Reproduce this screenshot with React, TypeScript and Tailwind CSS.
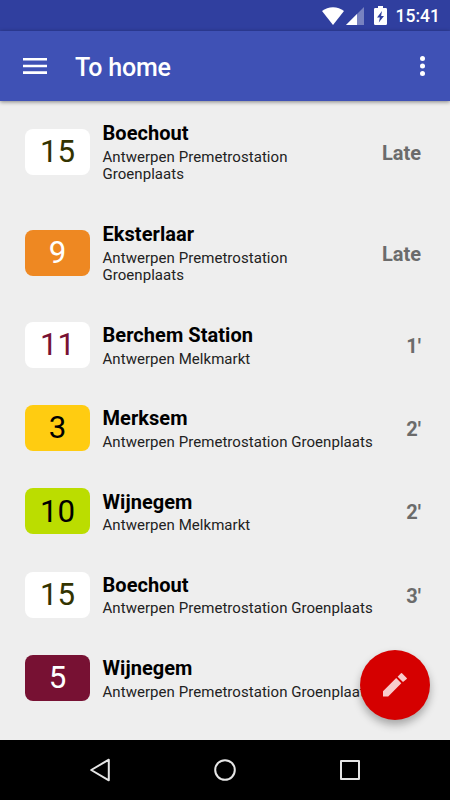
type Departure = {
  line: string;
  badge: string;
  destination: string;
  stop: string;
  time: string;
};

const departures: Departure[] = [
  { line: "15", badge: "bg-white text-[#333300]", destination: "Boechout", stop: "Antwerpen Premetrostation Groenplaats", time: "Late" },
  { line: "9", badge: "bg-[#ee8822] text-white", destination: "Eksterlaar", stop: "Antwerpen Premetrostation Groenplaats", time: "Late" },
  { line: "11", badge: "bg-white text-[#771133]", destination: "Berchem Station", stop: "Antwerpen Melkmarkt", time: "1'" },
  { line: "3", badge: "bg-[#ffcc11] text-black", destination: "Merksem", stop: "Antwerpen Premetrostation Groenplaats", time: "2'" },
  { line: "10", badge: "bg-[#bbdd00] text-black", destination: "Wijnegem", stop: "Antwerpen Melkmarkt", time: "2'" },
  { line: "15", badge: "bg-white text-[#333300]", destination: "Boechout", stop: "Antwerpen Premetrostation Groenplaats", time: "3'" },
  { line: "5", badge: "bg-[#771133] text-white", destination: "Wijnegem", stop: "Antwerpen Premetrostation Groenplaats", time: "" },
];

function StatusBar() {
  return (
    <div className="flex h-[31px] shrink-0 items-center justify-end bg-[#303f9f] pr-[10px] text-white">
      <svg className="mt-px h-[18px] w-[22px]" viewBox="0 0 22 18" fill="currentColor">
        <path d="M0 4C6-1.1 16-1.1 22 4L11 18Z" />
      </svg>
      <svg className="mt-px ml-[2px] h-[18px] w-[18px]" viewBox="0 0 18 18" fill="currentColor">
        <path d="M0 18 18 0V18Z" fillOpacity="0.35" />
        <path d="M0 18 11 7V18Z" />
      </svg>
      <svg className="ml-[10px] h-[19px] w-[13px]" viewBox="0 0 13 19" fill="currentColor">
        <path
          fillRule="evenodd"
          d="M4 0H9V2H11.8Q13 2 13 3.2V17.8Q13 19 11.8 19H1.2Q0 19 0 17.8V3.2Q0 2 1.2 2H4ZM8 5 3 11.4H5.9L4.8 16.4 10 9.9H7.1Z"
        />
      </svg>
      <span className="mt-[2px] ml-[9px] text-[17.5px] leading-none font-medium">15:41</span>
    </div>
  );
}

function Toolbar() {
  return (
    <header className="z-10 flex h-[70px] shrink-0 items-center bg-[#3f51b5] pr-[25px] pl-[23px] text-white shadow-[0_1px_4px_rgba(0,0,0,0.45)]">
      <button aria-label="Menu">
        <svg className="h-4 w-6" viewBox="0 0 24 16" fill="currentColor">
          <path d="M0 0H24V2.6H0ZM0 6.7H24V9.3H0ZM0 13.3H24V15.9H0Z" />
        </svg>
      </button>
      <h1 className="mt-[2px] ml-7 grow text-[25px] leading-none font-medium tracking-[-0.2px]">To home</h1>
      <button aria-label="More options">
        <svg className="h-5 w-[5px]" viewBox="0 0 5 20" fill="currentColor">
          <circle cx="2.5" cy="2.5" r="2.5" />
          <circle cx="2.5" cy="10" r="2.5" />
          <circle cx="2.5" cy="17.5" r="2.5" />
        </svg>
      </button>
    </header>
  );
}

function DepartureRow({ departure }: { departure: Departure }) {
  const late = departure.time === "Late";

  return (
    <li className="flex items-center py-[18.1px] pr-[29px] pl-[25px]">
      <div
        className={`flex h-[46px] w-[65px] shrink-0 items-center justify-center rounded-[8px] text-[31.25px] leading-none font-normal ${departure.badge}`}
      >
        {departure.line}
      </div>
      <div className="ml-[12.5px] min-w-0 grow pt-[3px]">
        <p className="text-[20px] leading-[23.5px] font-bold tracking-[0.05px] text-black">{departure.destination}</p>
        <p className="mt-[3px] text-[15px] leading-[17.6px] tracking-[0.05px] text-[#222]">{departure.stop}</p>
      </div>
      <span className={`${late ? "ml-5" : "ml-2"} shrink-0 pt-[2px] text-[20px] leading-none font-bold text-[#6b6b6b]`}>
        {departure.time}
      </span>
    </li>
  );
}

function NavigationBar() {
  return (
    <nav className="flex h-[60px] shrink-0 items-center justify-center gap-[101px] bg-black text-[#e6e6e6]">
      <svg className="size-6" viewBox="0 0 24 24" fill="none" stroke="currentColor" strokeWidth="2" strokeLinejoin="round">
        <path d="M20.8 1.7V22.3L3.2 12Z" />
      </svg>
      <svg className="size-6" viewBox="0 0 24 24" fill="none" stroke="currentColor" strokeWidth="2">
        <circle cx="12" cy="12" r="9.8" />
      </svg>
      <svg className="size-6" viewBox="0 0 24 24" fill="none" stroke="currentColor" strokeWidth="2" strokeLinejoin="round">
        <path d="M3 3H21V21H3Z" />
      </svg>
    </nav>
  );
}

export default function App() {
  return (
    <div className="relative flex h-[800px] w-[450px] flex-col overflow-hidden bg-[#eeeeee] font-['Roboto',sans-serif]">
      <StatusBar />
      <Toolbar />
      <ul className="min-h-0 grow overflow-hidden pt-[0.3px]">
        {departures.map((departure, index) => (
          <DepartureRow key={index} departure={departure} />
        ))}
      </ul>
      <button
        className="absolute right-5 bottom-20 flex size-[70px] items-center justify-center rounded-full bg-[#d50000] text-[#f8cccc] shadow-[0_5px_9px_rgba(0,0,0,0.3)]"
        aria-label="Edit"
      >
        <svg className="size-6" viewBox="0 0 24 24" fill="currentColor">
          <path d="M0 23.5V18.3L13.2 5.1 18.3 10.2 5.2 23.5ZM14.6 3.7 18 .3Q18.5-.2 19 .3L23.7 5Q24.2 5.5 23.7 6L20 9.1Z" />
        </svg>
      </button>
      <NavigationBar />
    </div>
  );
}
